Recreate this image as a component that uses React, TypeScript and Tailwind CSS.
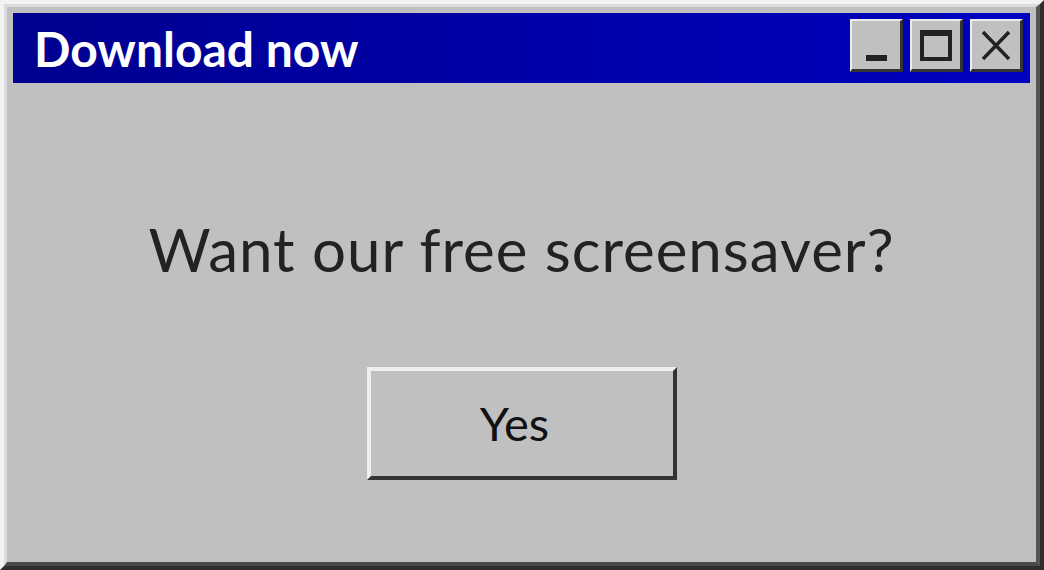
import React from 'react';

const font = { fontFamily: 'Lato, "Open Sans", sans-serif' };

function TitleButton({ children }: { children: React.ReactNode }) {
  return (
    <button className="flex h-[53px] w-[53px] items-center justify-center border-t-2 border-l-2 border-r-[3px] border-b-[3px] border-t-[#ececec] border-l-[#ececec] border-r-[#333] border-b-[#333] bg-[#c0c0c0]">
      {children}
    </button>
  );
}

export default function App() {
  return (
    <div className="h-[570px] w-[1044px] bg-[#c0c0c0]" style={font}>
      <div className="flex h-full w-full flex-col border-t-4 border-l-4 border-r-4 border-b-4 border-t-[#f2f2f2] border-l-[#f2f2f2] border-r-[#2e2e2e] border-b-[#2e2e2e]">
        <div className="flex h-full w-full flex-col border-t-[3px] border-l-[3px] border-r-4 border-b-4 border-t-[#dcdcdc] border-l-[#dcdcdc] border-r-[#555] border-b-[#4a4a4a] px-[6px] pt-[6px]">
          <div className="flex h-[70px] items-start justify-between bg-gradient-to-r from-[#000090] to-[#0000c0] pl-[21px] pr-[7px] pt-[6px]">
            <span className="mt-[6px] text-[48px] font-bold leading-none text-white">Download now</span>
            <div className="flex gap-[7px]">
              <TitleButton>
                <div className="mt-[26px] h-[6px] w-[21px] bg-[#222]" />
              </TitleButton>
              <TitleButton>
                <div className="h-[31px] w-[32px] border-[4px] border-t-[6px] border-[#222]" />
              </TitleButton>
              <TitleButton>
                <svg width="30" height="31" viewBox="0 0 30 31">
                  <path d="M2 2 L28 29 M28 2 L2 29" stroke="#222" strokeWidth="3.5" />
                </svg>
              </TitleButton>
            </div>
          </div>
          <div className="flex flex-1 flex-col items-center">
            <p className="mt-[136px] text-[60px] leading-none tracking-[1px] text-[#222]">Want our free screensaver?</p>
            <button className="mt-[88px] flex h-[113px] w-[310px] items-center justify-center border-t-4 border-l-4 border-r-4 border-b-4 border-t-[#eeeeee] border-l-[#eeeeee] border-r-[#333] border-b-[#333] bg-[#c0c0c0] pr-[14px] text-[47px] text-[#111]">
              Yes
            </button>
          </div>
        </div>
      </div>
    </div>
  );
}
